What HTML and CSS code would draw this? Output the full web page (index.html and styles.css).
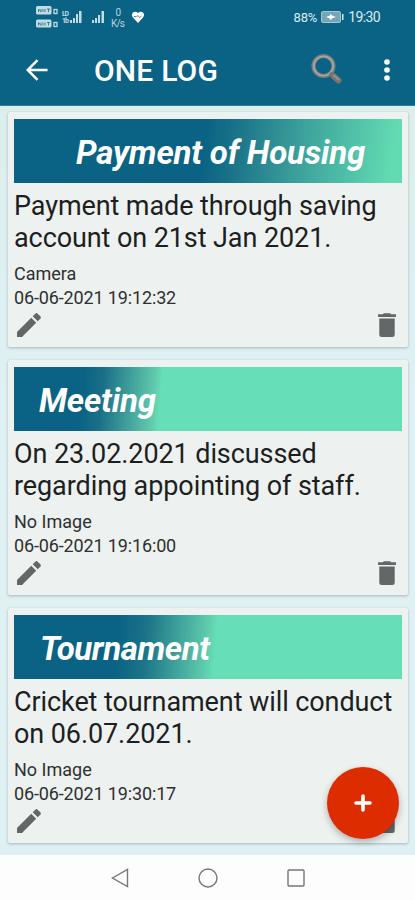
FILE: index.html
```html
<!DOCTYPE html>
<html lang="en">
<head>
<meta charset="utf-8">
<title>One Log</title>
<link rel="stylesheet" href="styles.css">
</head>
<body>
<svg class="defs" width="0" height="0">
  <symbol id="pencil" viewBox="0 0 24 24"><path d="M0 19v5h5L19.200 9.800l-5-5zM23.300 5.700c.8-.8.8-1.600 0-2.400L20.700.7c-.8-.8-1.600-.8-2.400 0l-2.600 2.600 5 5z"/></symbol>
  <symbol id="trash" viewBox="0 0 18 24"><path d="M1.300 5.500v16Q1.300 24 3.800 24h10.400q2.500 0 2.500-2.500v-16zM0 1.300h4.700L6 .3h6l1.300 1H18V4H0z"/></symbol>
</svg>
<div class="screen">
  <header class="top">
    <div class="status">
      <svg class="signals" width="112" height="24" viewBox="0 0 112 24">
        <g fill="#c3dae3">
          <rect x="0" y="0" width="15.500" height="8.500" rx="1.500"/><rect x="0" y="13.500" width="15.500" height="8" rx="1.500"/>
          <g fill="none" stroke="#c3dae3" stroke-width="1.300"><rect x="18" y="3.500" width="3" height="4"/><rect x="18" y="16.500" width="3" height="4"/></g>
          <path d="M34 14h2v3h-2zM37 12h2v5h-2zM40 8h2v9h-2zM43 5h2.500v12H43z"/>
          <path d="M56 14h2v3h-2zM59 12h2v5h-2zM62 9h2v8h-2zM65.500 5H68v12h-2.500z"/>
          <path fill="#fff" d="M102 17l-5-5.500c-3-3.500 1-8 5-4.500 4-3.500 8 1 5 4.500z"/>
        </g>
        <path d="M98 10.500h2.500l1.500-1 1.500 2 2-1.500" fill="none" stroke="#5592aa" stroke-width="1"/>
        <g fill="none" stroke="#3b809b"><path d="M2.500 6V3L5 6V3M7 3v3M9 3v3M11 3h3M12.500 3v3M2.500 19.500v-3l2.500 3v-3M7 16.500v3M9 16.500v3M11 16.500h3M12.500 16.500v3"/></g>
        <g class="tiny"><text x="26" y="10" textLength="7">LD</text><text x="26" y="17" textLength="7">1b</text></g>
        <g class="rate"><text x="79.500" y="10">0</text><text x="75" y="21" textLength="14">K/s</text></g>
      </svg>
      <div class="power">
        <span class="percent">88%</span>
        <svg width="23" height="12" viewBox="0 0 23 12"><rect x=".5" y=".5" width="19" height="11" rx="1.500" fill="#72a6b9" stroke="#a5c5d1"/><path d="M21 3h1.500v6H21z" fill="#dceaf0"/><path d="M5 6l4-1.500V3l3 2 3 1-3 1-3 2V7.500z" fill="#fff"/></svg>
        <span class="clock">19:30</span>
      </div>
    </div>
    <div class="bar">
      <svg class="back" width="22" height="22" viewBox="0 0 22 22" fill="none" stroke="#fff" stroke-width="2.500"><path d="M21.500 11H2M11.500 1.200L1.700 11l9.800 9.800"/></svg>
      <h1>ONE LOG</h1>
      <svg class="search" width="34" height="34" viewBox="0 0 34 34" fill="none"><circle cx="13.500" cy="13" r="10" stroke="#777c7e" stroke-width="4.200"/><circle cx="13.500" cy="13" r="9.700" stroke="#a5a5a3" stroke-width="1.800"/><path d="M20 20l3 3" stroke="#777" stroke-width="3.500"/><path d="M23.500 23l5 4.500" stroke="#777370" stroke-width="6" stroke-linecap="round"/><path d="M24 22.500l4.500 4" stroke="#96928f" stroke-width="2" stroke-linecap="round"/></svg>
      <svg class="more" width="6" height="22" viewBox="0 0 6 22" fill="#fff"><circle cx="3" cy="3" r="2.800"/><circle cx="3" cy="11" r="2.800"/><circle cx="3" cy="19" r="2.800"/></svg>
    </div>
  </header>
  <main class="list">
    <article class="card">
      <h2 class="title payment">Payment of Housing</h2>
      <p class="text">Payment made through saving<br>account on 21st Jan 2021.</p>
      <p class="meta">Camera<br><span class="date">06-06-2021 19:12:32</span></p>
      <div class="actions"><svg width="24" height="24"><use href="#pencil"/></svg><svg width="18" height="24"><use href="#trash"/></svg></div>
    </article>
    <article class="card">
      <h2 class="title meeting">Meeting</h2>
      <p class="text">On 23.02.2021 discussed<br>regarding appointing of staff.</p>
      <p class="meta">No Image<br><span class="date">06-06-2021 19:16:00</span></p>
      <div class="actions"><svg width="24" height="24"><use href="#pencil"/></svg><svg width="18" height="24"><use href="#trash"/></svg></div>
    </article>
    <article class="card">
      <h2 class="title tournament">Tournament</h2>
      <p class="text">Cricket tournament will conduct<br>on 06.07.2021.</p>
      <p class="meta">No Image<br><span class="date">06-06-2021 19:30:17</span></p>
      <div class="actions"><svg width="24" height="24"><use href="#pencil"/></svg><svg width="18" height="24"><use href="#trash"/></svg></div>
    </article>
    <div class="fab"><svg width="18" height="18" viewBox="0 0 18 18" stroke="#fff" stroke-width="3.600" stroke-linecap="round"><path d="M9 2v14M2 9h14"/></svg></div>
  </main>
  <nav class="nav">
    <svg width="18" height="20" viewBox="0 0 18 20"><path d="M16.500 1.500v17L1.500 10z"/></svg>
    <svg width="20" height="20" viewBox="0 0 20 20"><circle cx="10" cy="10" r="9"/></svg>
    <svg width="18" height="18" viewBox="0 0 18 18"><rect x="1" y="1" width="16" height="16" rx="1"/></svg>
  </nav>
</div>
</body>
</html>
```

FILE: styles.css
```css
* { box-sizing: border-box; margin: 0; padding: 0; }
body { font-family: Roboto, sans-serif; background: #fff; overflow: hidden; }
svg { display: block; flex: none; }
.defs { position: absolute; }
.screen { width: 415px; height: 900px; display: flex; flex-direction: column; }
.top { height: 106px; background: #0a6384; border-bottom: 1px solid #377b99; color: #fff; }
.status { height: 35px; display: flex; justify-content: space-between; padding: 6px 35px 0 36px; }
.tiny { font-size: 7px; font-weight: 700; fill: #c3dae3; }
.rate { font-size: 10px; fill: #b8d2dd; }
.power { display: flex; align-items: center; height: 22px; gap: 4px; font-size: 13px; color: #dceaf0; }
.percent { letter-spacing: -.2px; }
.clock { font-size: 14px; letter-spacing: -.6px; }
.bar { height: 70px; display: flex; align-items: center; padding: 0 25px 0 26px; }
h1 { font-size: 30px; font-weight: 500; line-height: 40px; margin: 2px 0 0 46px; width: 126px; white-space: nowrap; letter-spacing: .2px; }
.search { margin-left: 90px; }
.more { margin-left: auto; }
.list { position: relative; height: 749px; background: linear-gradient(#dceeed, #e0f1f4 45%, #e0f1f4); padding: 6px 7px 0 8px; display: flex; flex-direction: column; gap: 13px; }
.card { height: 235px; background: #edf1f0; padding: 7px 6px 0; border-radius: 2px; box-shadow: 0 1px 3px rgba(50, 80, 85, .35); }
.title { height: 64px; line-height: 68px; font-size: 33px; font-weight: 700; font-style: italic; color: #fff; white-space: nowrap; letter-spacing: -.2px; }
.payment { padding-left: 62px; background: linear-gradient(97deg, #0a6384 49%, #1b7489 57%, #3da39c 74%, #62dbb2 97%); }
.meeting { padding-left: 25px; background: linear-gradient(95deg, #0a6384 18%, #1b7088 23%, #60c9ac 36%, #66dfb9 38%); }
.tournament { padding-left: 26px; letter-spacing: -.4px; background: linear-gradient(95deg, #0a6384 27%, #1b7488 34%, #5cc8ab 49%, #66dfb9 52%); }
.text { font-size: 27px; line-height: 32px; margin-top: 7px; color: #1d1f1f; white-space: nowrap; letter-spacing: -.09px; }
.meta { font-size: 18px; line-height: 24px; margin-top: 8px; color: #2d3030; }
.date { letter-spacing: -.14px; }
.actions { display: flex; justify-content: space-between; padding: 3px 6px 0 3px; fill: #636767; }
.fab { position: absolute; left: 327px; top: 661px; width: 72px; height: 72px; border-radius: 50%; background: #dd2c00; display: flex; align-items: center; justify-content: center; box-shadow: 0 3px 7px rgba(0, 0, 0, .28); }
.nav { height: 45px; background: #fdfdfd; display: flex; align-items: center; padding-left: 111px; gap: 69px; fill: none; stroke: #777; stroke-width: 1.4; }
```
